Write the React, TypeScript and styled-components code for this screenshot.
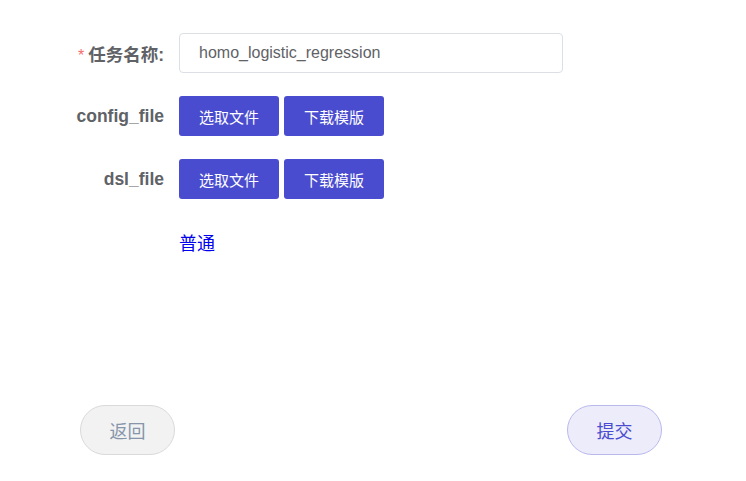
import React from "react";
import styled, { createGlobalStyle } from "styled-components";

const Global = createGlobalStyle`
  html, body { margin: 0; padding: 0; background: #fff; }
  body { font-family: "Liberation Sans", "Noto Sans CJK SC", sans-serif; }
  * { box-sizing: border-box; }
`;

const Page = styled.div`
  width: 746px;
  height: 481px;
  display: flex;
  flex-direction: column;
  justify-content: space-between;
  padding: 33px 84px 26px 80px;
`;

const Form = styled.div`
  display: flex;
  flex-direction: column;
  gap: 23px;
`;

const Row = styled.div`
  display: flex;
  align-items: center;
  height: 40px;
  margin-left: -16px;
`;

const Label = styled.label`
  width: 115px;
  padding-right: 15px;
  text-align: right;
  font-size: 17.5px;
  font-weight: bold;
  color: #606266;
  white-space: nowrap;
`;

const Star = styled.span`
  color: #f56c6c;
  margin-right: 4px;
  font-weight: normal;
  font-size: 16px;
`;

const Input = styled.input`
  width: 384px;
  height: 40px;
  border: 1px solid #dcdfe6;
  border-radius: 4px;
  padding: 0 19px;
  font-family: "Liberation Sans", "Noto Sans CJK SC", sans-serif;
  font-size: 16px;
  color: #606266;
  outline: none;
`;

const Buttons = styled.div`
  display: flex;
  gap: 5px;
`;

const Btn = styled.button`
  width: 100px;
  height: 40px;
  border: none;
  border-radius: 3px;
  background: #4a4ccf;
  color: #fff;
  font-family: "Liberation Sans", "Noto Sans CJK SC", sans-serif;
  font-size: 15px;
  cursor: pointer;
`;

const Link = styled.a`
  font-size: 18px;
  color: #0000ee;
  font-family: "Liberation Sans", "Noto Sans CJK SC", sans-serif;
`;

const Footer = styled.div`
  display: flex;
  justify-content: space-between;
`;

const Pill = styled.button<{ $primary?: boolean }>`
  width: 95px;
  height: 50px;
  border-radius: 25px;
  font-family: "Liberation Sans", "Noto Sans CJK SC", sans-serif;
  font-size: 18px;
  border: 1px solid ${(p) => (p.$primary ? "#b9b9ee" : "#dadada")};
  background: ${(p) => (p.$primary ? "#ececfa" : "#f2f2f2")};
  color: ${(p) => (p.$primary ? "#4a4ccf" : "#8795ab")};
  cursor: pointer;
`;

export default function App() {
  return (
    <>
      <Global />
      <Page>
        <Form>
          <Row>
            <Label>
              <Star>*</Star>任务名称:
            </Label>
            <Input defaultValue="homo_logistic_regression" />
          </Row>
          <Row>
            <Label>config_file</Label>
            <Buttons>
              <Btn>选取文件</Btn>
              <Btn>下载模版</Btn>
            </Buttons>
          </Row>
          <Row>
            <Label>dsl_file</Label>
            <Buttons>
              <Btn>选取文件</Btn>
              <Btn>下载模版</Btn>
            </Buttons>
          </Row>
          <Row>
            <Label />
            <Link>普通</Link>
          </Row>
        </Form>
        <Footer>
          <Pill>返回</Pill>
          <Pill $primary>提交</Pill>
        </Footer>
      </Page>
    </>
  );
}
